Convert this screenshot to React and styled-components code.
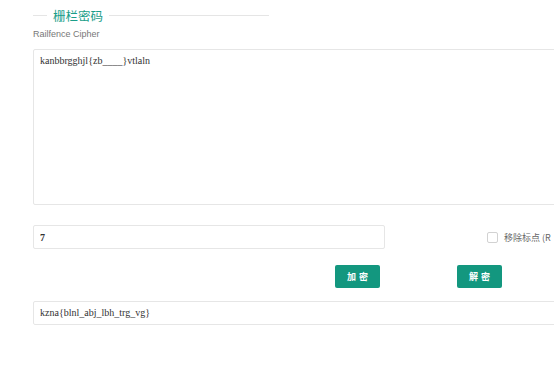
import React, { useState } from "react";
import styled, { createGlobalStyle } from "styled-components";

const GlobalStyle = createGlobalStyle`
  html, body {
    margin: 0;
    padding: 0;
    background: #fff;
    overflow: hidden;
  }
  body {
    font-family: "Liberation Sans", "Noto Sans CJK SC", sans-serif;
  }
`;

const Page = styled.div`
  width: 554px;
  padding: 6px 0 0 33px;
  box-sizing: border-box;
`;

const Legend = styled.div`
  width: 236px;
  display: flex;
  align-items: center;
  gap: 5px;

  &::before,
  &::after {
    content: "";
    height: 1px;
    background: #e5e5e5;
  }
  &::before {
    width: 14px;
  }
  &::after {
    flex: 1;
  }
`;

const LegendText = styled.span`
  color: #1a9e89;
  font-size: 12.5px;
  line-height: 19px;
  padding: 0 1px;
  font-family: "Noto Sans CJK SC", sans-serif;
`;

const SubTitle = styled.div`
  color: #777;
  font-size: 9px;
  margin-top: 3px;
  line-height: 12px;
`;

const TextArea = styled.textarea`
  display: block;
  box-sizing: border-box;
  width: 540px;
  height: 156px;
  margin-top: 9px;
  border: 1px solid #e6e6e6;
  border-radius: 2px;
  padding: 5px 6px;
  resize: none;
  outline: none;
  color: #333;
  font-family: "Liberation Serif", serif;
  font-size: 10px;
  line-height: 12px;
`;

const Row = styled.div`
  display: flex;
  align-items: center;
  margin-top: ${(p) => p.top || 0}px;
`;

const KeyInput = styled.input`
  flex-shrink: 0;
  box-sizing: border-box;
  width: 352px;
  height: 24px;
  border: 1px solid #e6e6e6;
  border-radius: 2px;
  padding: 0 6px;
  outline: none;
  color: #333;
  font-family: "Liberation Serif", serif;
  font-weight: bold;
  font-size: 10px;
`;

const CheckLabel = styled.label`
  flex-shrink: 0;
  display: flex;
  align-items: center;
  gap: 6px;
  margin-left: 102px;
  color: #666;
  font-size: 9px;
  white-space: nowrap;
  font-family: "Noto Sans CJK SC", sans-serif;
`;

const Box = styled.span`
  width: 9px;
  height: 9px;
  border: 1px solid #d2d2d2;
  border-radius: 2px;
  background: #fff;
`;

const Button = styled.button`
  flex-shrink: 0;
  width: 45px;
  height: 23px;
  border: none;
  border-radius: 2px;
  background: #13977f;
  color: #fff;
  font-size: 9px;
  font-weight: bold;
  letter-spacing: 3px;
  padding: 0 0 0 3px;
  cursor: pointer;
  margin-left: ${(p) => p.left}px;
  font-family: "Noto Sans CJK SC", sans-serif;
`;

const Output = styled(TextArea)`
  height: 24px;
  margin-top: 13px;
  padding: 5px 6px;
`;

const App = () => {
  const [text, setText] = useState("kanbbrgghjl{zb____}vtlaln");
  const [key, setKey] = useState("7");
  return (
    <>
      <GlobalStyle />
      <Page>
        <Legend>
          <LegendText>栅栏密码</LegendText>
        </Legend>
        <SubTitle>Railfence Cipher</SubTitle>
        <TextArea value={text} onChange={(e) => setText(e.target.value)} />
        <Row top={20}>
          <KeyInput value={key} onChange={(e) => setKey(e.target.value)} />
          <CheckLabel>
            <Box />
            移除标点 (R
          </CheckLabel>
        </Row>
        <Row top={16}>
          <Button left={302}>加密</Button>
          <Button left={77}>解密</Button>
        </Row>
        <Output readOnly value="kzna{blnl_abj_lbh_trg_vg}" />
      </Page>
    </>
  );
};

export default App;
